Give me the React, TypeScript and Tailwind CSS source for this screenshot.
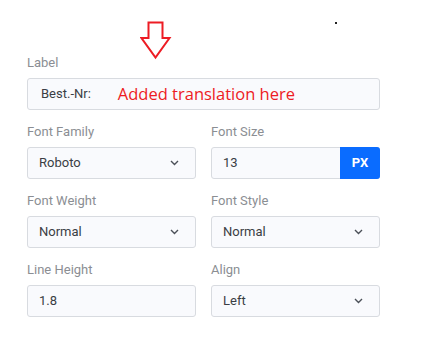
import React from "react";

const Chevron = () => (
  <svg width="9" height="6" viewBox="0 0 9 6" className="shrink-0">
    <path d="M1 1 L4.5 4.5 L8 1" fill="none" stroke="#4b5058" strokeWidth="1.4" />
  </svg>
);

const Label = ({ children }: { children: React.ReactNode }) => (
  <div className="text-[13px] leading-4 text-[#8b8e93]">{children}</div>
);

const Select = ({ value }: { value: string }) => (
  <div className="mt-[7px] h-[32px] flex items-center justify-between rounded-[3px] border border-[#d8dbe0] bg-[#f9fafd] pl-[11px] pr-[16px] text-[13px] text-[#3a3e44]">
    <span>{value}</span>
    <Chevron />
  </div>
);

const Input = ({ value }: { value: string }) => (
  <div className="mt-[7px] h-[32px] flex items-center rounded-[3px] border border-[#d8dbe0] bg-[#f9fafd] pl-[11px] text-[13px] text-[#3a3e44]">
    <span>{value}</span>
  </div>
);

export default function App() {
  return (
    <div
      className="relative w-[421px] h-[349px] bg-white"
      style={{ fontFamily: "Roboto, 'Liberation Sans', sans-serif" }}
    >
      {/* annotation arrow */}
      <svg
        className="absolute left-[140px] top-[21px]"
        width="32"
        height="40"
        viewBox="0 0 32 40"
      >
        <polygon
          points="8.5,1.5 22.5,1.5 22.5,17 29.5,17 15.5,36.5 1.5,17 8.5,17"
          fill="none"
          stroke="#ed1c24"
          strokeWidth="2"
        />
      </svg>
      <div className="absolute left-[335px] top-[22px] w-[2px] h-[2px] bg-[#222]" />

      <div className="pl-[27px] pt-[55px] w-[380px]">
        <div className="w-[353px]">
          <Label>Label</Label>
          <div className="mt-[7px] h-[32px] flex items-center rounded-[3px] border border-[#d8dbe0] bg-[#f9fafd] pl-[13px] text-[13px] text-[#3a3e44]">
            <span>Best.-Nr:</span>
            <span
              className="ml-[27px] text-[16.5px] text-[#ed1c24]"
              style={{ fontFamily: "'Open Sans', 'Noto Sans', sans-serif" }}
            >
              Added translation here
            </span>
          </div>
        </div>

        <div className="mt-[14px] grid grid-cols-2 gap-x-[15px] gap-y-[14px] w-[353px]">
          <div>
            <Label>Font Family</Label>
            <Select value="Roboto" />
          </div>
          <div>
            <Label>Font Size</Label>
            <div className="mt-[7px] h-[32px] flex items-stretch rounded-[3px] border border-[#d8dbe0] bg-[#f9fafd] text-[13px] text-[#3a3e44]">
              <div className="flex-1 flex items-center pl-[11px]">13</div>
              <div className="w-[40px] -my-px -mr-px flex items-center justify-center rounded-r-[3px] bg-[#0a6cff] text-white font-bold text-[13px]">
                PX
              </div>
            </div>
          </div>
          <div>
            <Label>Font Weight</Label>
            <Select value="Normal" />
          </div>
          <div>
            <Label>Font Style</Label>
            <Select value="Normal" />
          </div>
          <div>
            <Label>Line Height</Label>
            <Input value="1.8" />
          </div>
          <div>
            <Label>Align</Label>
            <Select value="Left" />
          </div>
        </div>
      </div>
    </div>
  );
}
